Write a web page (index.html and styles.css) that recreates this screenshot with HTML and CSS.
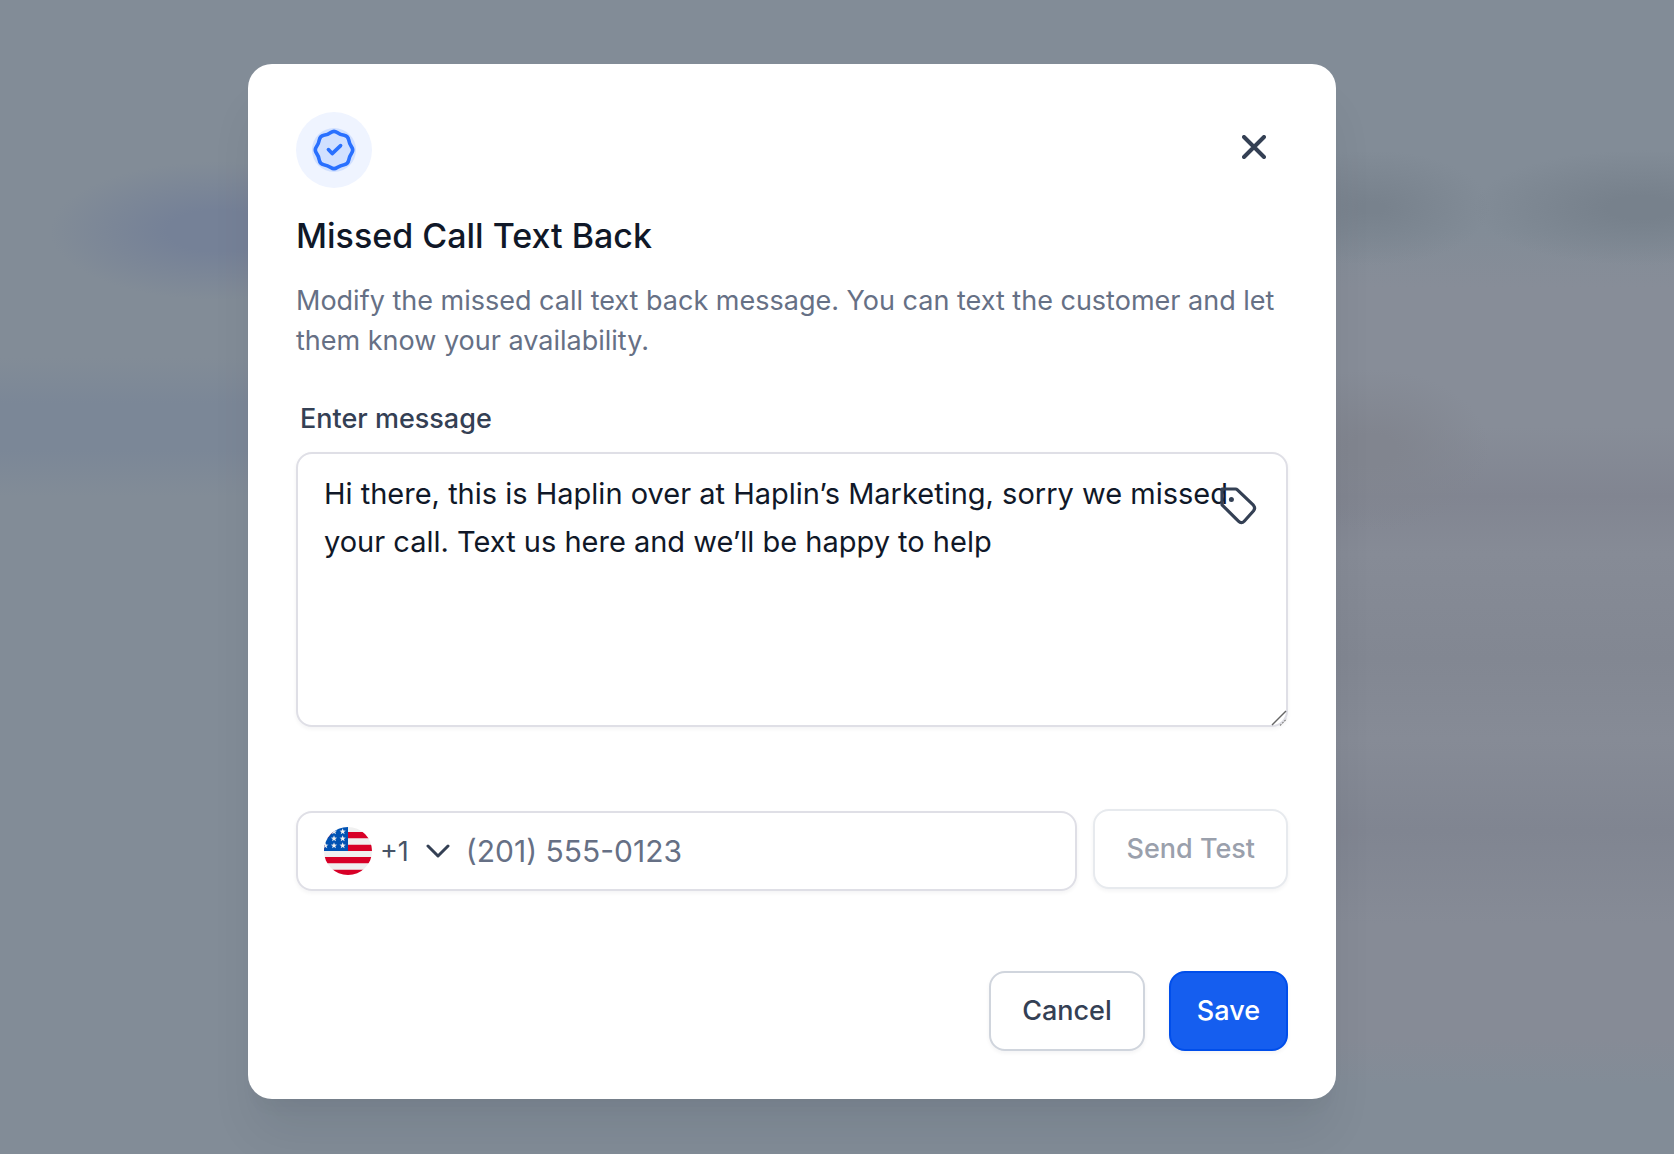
FILE: index.html
```html
<!DOCTYPE html>
<html lang="en">
<head>
    <meta charset="UTF-8">
    <meta name="viewport" content="width=device-width, initial-scale=1.0">
    <title>Missed Call Text Back</title>
    <link rel="stylesheet" href="styles.css">
</head>
<body>
    <div class="overlay">
        <div class="modal" role="dialog" aria-modal="true" aria-labelledby="modal-title">
            <!-- Header -->
            <div class="modal-header">
                <span class="badge">
                    <svg width="44" height="44" viewBox="-22 -22 44 44" fill="none" aria-hidden="true">
                        <circle r="22" fill="#d1e0ff"/>
                        <path d="M-3.17-17.57Q0-19.83 3.17-17.57Q6.34-15.3 10.18-14.66Q14.02-14.02 14.66-10.18Q15.3-6.34 17.57-3.17Q19.83 0 17.57 3.17Q15.3 6.34 14.66 10.18Q14.02 14.02 10.18 14.66Q6.34 15.3 3.17 17.57Q0 19.83-3.17 17.57Q-6.34 15.3-10.18 14.66Q-14.02 14.02-14.66 10.18Q-15.3 6.34-17.57 3.17Q-19.83 0-17.57-3.17Q-15.3-6.34-14.66-10.18Q-14.02-14.02-10.18-14.66Q-6.34-15.3-3.17-17.57Z" stroke="#2970ff" stroke-width="3.6" stroke-linejoin="round"/>
                        <path d="M-5.6-.4L-1.8 3.6L6.6-4.4" stroke="#2970ff" stroke-width="3.6" stroke-linecap="round" stroke-linejoin="round"/>
                    </svg>
                </span>
                <button type="button" class="close-btn" aria-label="Close">
                    <svg width="24" height="24" viewBox="0 0 24 24" fill="none" aria-hidden="true">
                        <path d="M2 2L22 22M22 2L2 22" stroke="#344054" stroke-width="4" stroke-linecap="round"/>
                    </svg>
                </button>
            </div>

            <h1 class="modal-title" id="modal-title">Missed Call Text Back</h1>
            <p class="modal-text">Modify the missed call text back message. You can text the customer and let them know your availability.</p>

            <!-- Message -->
            <label class="field-label" for="message">Enter message</label>
            <div class="message-box">
                <textarea id="message" class="message-input" spellcheck="false">Hi there, this is Haplin over at Haplin’s Marketing, sorry we missed your call. Text us here and we’ll be happy to help</textarea>
                <button type="button" class="tag-btn" aria-label="Insert tag">
                    <svg width="40" height="40" viewBox="0 0 40 40" fill="none" aria-hidden="true">
                        <path d="M4 3H17.5Q18.6 3 19.4 3.8L35.4 19.2Q37.8 22 35.4 25L26.2 35.2Q23.4 38.2 20.4 35.2L4 18.8Z" stroke="#344054" stroke-width="3.2" stroke-linejoin="round"/>
                        <circle cx="13.4" cy="13.4" r="2.5" fill="#344054"/>
                    </svg>
                </button>
                <svg class="resize-grip" width="16" height="16" viewBox="0 0 16 16" fill="none" aria-hidden="true">
                    <path d="M1 15L15 1" stroke="#666" stroke-width="1.4"/>
                    <path d="M9 15.500L15.500 9" stroke="#888" stroke-width="1.2" stroke-dasharray="2 1"/>
                </svg>
            </div>

            <!-- Test number -->
            <div class="phone-row">
                <div class="phone-field">
                    <button type="button" class="country-btn" aria-label="Country code">
                        <svg width="48" height="48" viewBox="0 0 144 144" aria-hidden="true">
                            <defs>
                                <clipPath id="round"><circle cx="72" cy="72" r="72"/></clipPath>
                                <path id="star" d="M0-10L2.400-3.200L9.500-3.100L3.800 1.200L5.900 8.100L0 4L-5.900 8.100L-3.800 1.200L-9.500-3.100L-2.400-3.200Z" fill="#f0f0f0"/>
                            </defs>
                            <g clip-path="url(#round)">
                                <rect width="144" height="144" fill="#f0f0f0"/>
                                <path d="M0 15H144V34H0ZM0 53H144V72H0ZM0 90H144V109H0ZM0 128H144V144H0Z" fill="#d80027"/>
                                <rect width="72" height="72" fill="#0052b4"/>
                                <use href="#star" x="56" y="14"/>
                                <use href="#star" x="56" y="35"/>
                                <use href="#star" x="56" y="56"/>
                                <use href="#star" x="30" y="14"/>
                                <use href="#star" x="30" y="35"/>
                                <use href="#star" x="30" y="56"/>
                                <use href="#star" x="4" y="56"/>
                            </g>
                        </svg>
                        <span class="country-code">+1</span>
                        <svg width="24" height="14" viewBox="0 0 24 14" fill="none" aria-hidden="true">
                            <path d="M2 2L12 12L22 2" stroke="#344054" stroke-width="3" stroke-linecap="round" stroke-linejoin="round"/>
                        </svg>
                    </button>
                    <input type="tel" class="phone-input" placeholder="(201) 555-0123" aria-label="Phone number">
                </div>
                <button type="button" class="btn btn-test" disabled>Send Test</button>
            </div>

            <!-- Actions -->
            <div class="modal-actions">
                <button type="button" class="btn">Cancel</button>
                <button type="button" class="btn btn-primary">Save</button>
            </div>
        </div>
    </div>
</body>
</html>
```

FILE: styles.css
```css
* {
    box-sizing: border-box;
}

body {
    margin: 0;
    font-family: Inter, "Liberation Sans", sans-serif;
    color: #344054;
    background-color: #828c97;
}

button,
input,
textarea {
    font-family: inherit;
    color: inherit;
    margin: 0;
}

button {
    cursor: pointer;
}

/* Dimmed, blurred page behind the dialog */
.overlay {
    min-height: 100vh;
    padding: 64px 90px 55px 0;
    display: flex;
    justify-content: center;
    align-items: flex-start;
    background-image:
        radial-gradient(ellipse 10% 6% at 13% 20%, #758197 30%, rgba(117, 129, 151, 0)),
        radial-gradient(ellipse 7% 5% at 82% 18%, #78828d 10%, rgba(120, 130, 141, 0)),
        radial-gradient(ellipse 10% 5% at 98% 18%, #77818c 20%, rgba(119, 129, 140, 0)),
        radial-gradient(ellipse 7% 7% at 82% 39%, #81858f 20%, rgba(129, 133, 143, 0)),
        linear-gradient(#828c97 31%, #7b8797 35%, #7b8797 39%, #828c97 43%),
        linear-gradient(#828c97 20%, #878d98 25%, #878d98 37%, #818591 43%, #868b96 48%, #828792 57%, #868b96 64%, #808591 72%, #868b96 80%, #868b96 90%, #828c97 94%);
    background-size: auto, auto, auto, auto, 50% 100%, 50% 100%;
    background-position: 0 0, 0 0, 0 0, 0 0, left top, right top;
    background-repeat: no-repeat;
}

.modal {
    width: 100%;
    max-width: 1088px;
    padding: 48px;
    background-color: #fff;
    border-radius: 24px;
    box-shadow: 0 40px 48px -8px rgba(16, 24, 40, 0.08), 0 16px 16px -8px rgba(16, 24, 40, 0.03);
}

.modal-header {
    display: flex;
    justify-content: space-between;
    align-items: flex-start;
}

.badge {
    width: 76px;
    height: 76px;
    display: flex;
    align-items: center;
    justify-content: center;
    border-radius: 50%;
    background-color: #eff4ff;
}

.close-btn {
    width: 68px;
    height: 70px;
    padding: 0;
    display: flex;
    align-items: center;
    justify-content: center;
    border: none;
    background: none;
}

.modal-title {
    margin: 20px 0 0;
    font-size: 34px;
    line-height: 56px;
    font-weight: 500;
    color: #101828;
}

.modal-text {
    margin: 17px 0 0;
    font-size: 27px;
    line-height: 40px;
    color: #667085;
}

.field-label {
    display: block;
    margin: 38px 4px 13px;
    font-size: 27px;
    line-height: 40px;
    font-weight: 500;
}

/* Message */
.message-box {
    position: relative;
}

.message-input {
    display: block;
    width: 100%;
    height: 275px;
    padding: 16px 26px;
    border: 2px solid #dfdfe6;
    border-radius: 16px;
    background-color: #fff;
    box-shadow: 0 2px 4px rgba(16, 24, 40, 0.05);
    font-size: 29px;
    line-height: 48px;
    color: #101828;
    resize: vertical;
}

.message-input::-webkit-resizer {
    display: none;
}

.tag-btn {
    position: absolute;
    top: 34px;
    right: 30px;
    padding: 0;
    display: flex;
    border: none;
    background: none;
}

.resize-grip {
    position: absolute;
    right: 1px;
    bottom: 1px;
    pointer-events: none;
}

/* Test number */
.phone-row {
    margin-top: 82px;
    display: flex;
    align-items: flex-start;
    gap: 16px;
}

.phone-field {
    flex: 1;
    height: 80px;
    margin-top: 2px;
    padding: 0 26px;
    display: flex;
    align-items: center;
    gap: 16px;
    border: 2px solid #dfdfe6;
    border-radius: 16px;
    box-shadow: 0 2px 4px rgba(16, 24, 40, 0.05);
}

.country-btn {
    padding: 0;
    display: flex;
    align-items: center;
    border: none;
    background: none;
    font-size: 27px;
    color: #475467;
}

.country-code {
    margin: 0 17px 0 8px;
}

.phone-input {
    flex: 1;
    min-width: 0;
    padding: 0;
    border: none;
    outline: none;
    background: none;
    font-size: 30px;
    line-height: 48px;
}

.phone-input::placeholder {
    color: #667085;
    opacity: 1;
}

/* Buttons */
.btn {
    height: 80px;
    padding: 0 31px;
    border: 2px solid #d0d5dd;
    border-radius: 16px;
    background-color: #fff;
    box-shadow: 0 2px 4px rgba(16, 24, 40, 0.05);
    font-size: 27px;
    line-height: 40px;
    font-weight: 500;
    white-space: nowrap;
}

.btn-test {
    border-color: #e7eaee;
    color: #9aa0ac;
    cursor: default;
}

.btn-primary {
    padding: 0 26px;
    border-color: #004eeb;
    background-color: #155eef;
    color: #fff;
}

.modal-actions {
    margin-top: 80px;
    display: flex;
    justify-content: flex-end;
    gap: 24px;
}

@media (max-width: 1200px) {
    .overlay {
        padding: 24px;
    }
}
```
